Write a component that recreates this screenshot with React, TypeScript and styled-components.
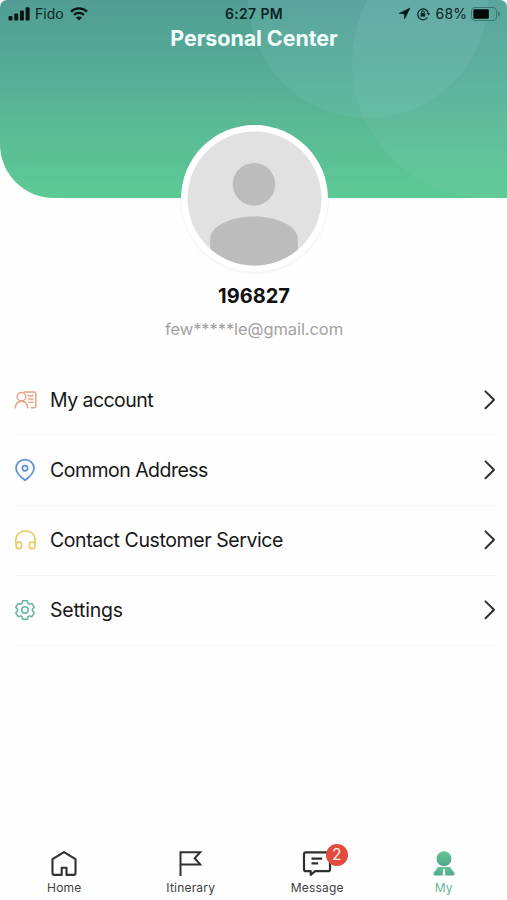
import React from "react";
import styled, { createGlobalStyle } from "styled-components";

const GlobalStyle = createGlobalStyle`
  * { box-sizing: border-box; }
  body { margin: 0; background: #fff; font-family: Inter, "Liberation Sans", sans-serif; }
  svg { display: block; flex: none; overflow: visible; }
`;

const Screen = styled.main`
  width: 507px;
  height: 900px;
  display: flex;
  flex-direction: column;
  align-items: stretch;
  background: #fefefe;
  overflow: hidden;
`;

const Header = styled.header`
  position: relative;
  height: 198px;
  flex: none;
  overflow: hidden;
  border-radius: 7px 7px 0 54px;
  background: linear-gradient(180deg, #519d94 0%, #56ad95 38%, #5ab995 62%, #5dca95 100%);
`;

const Bubbles = styled.svg`
  position: absolute;
  inset: 0;
`;

const StatusBar = styled.div`
  position: relative;
  display: grid;
  grid-template-columns: 1fr auto 1fr;
  height: 27px;
  padding: 0 7px 0 8px;
  align-items: center;
  color: #0c2422;
`;

const StatusGroup = styled.div<{ $end?: boolean }>`
  display: flex;
  align-items: center;
  justify-content: ${(p) => (p.$end ? "flex-end" : "flex-start")};
`;

const StatusText = styled.span<{ $bold?: boolean; $track?: number }>`
  font-size: 14px;
  line-height: 18px;
  font-weight: ${(p) => (p.$bold ? 600 : 400)};
  letter-spacing: ${(p) => p.$track ?? 0}px;
  white-space: nowrap;
`;

const Carrier = styled(StatusText)`
  margin: 0 6px 0 5px;
`;

const Percent = styled(StatusText)`
  margin: 0 4px 0 6px;
`;

const Title = styled.h1`
  position: relative;
  margin: -2px 0 0;
  padding-left: 1px;
  text-align: center;
  font-size: 21.5px;
  line-height: 26px;
  font-weight: 650;
  letter-spacing: -0.08px;
  color: #f3fffc;
`;

const Profile = styled.section`
  position: relative;
  display: flex;
  flex-direction: column;
  align-items: center;
  height: 167px;
  flex: none;
  padding-left: 1px;
`;

const Avatar = styled.div`
  width: 147px;
  height: 147px;
  margin-top: -73.5px;
  padding: 6px;
  border-radius: 50%;
  background: #fff;
  box-shadow: 0 1px 3px rgba(0, 0, 0, 0.07);
`;

const UserName = styled.h2`
  margin: 11.5px 0 0;
  font-size: 20px;
  line-height: 26px;
  font-weight: 700;
  color: #111;
`;

const Email = styled.p`
  margin: 9px 0 0;
  font-size: 16.5px;
  line-height: 22px;
  letter-spacing: -0.08px;
  color: #a2a2a2;
`;

const Menu = styled.nav`
  display: flex;
  flex-direction: column;
  padding: 0 12px 0 15px;
`;

const MenuRow = styled.a`
  display: flex;
  align-items: center;
  height: 70.25px;
  border-bottom: 1px solid #f3f3f3;
  color: #171717;
`;

const MenuIcon = styled.span`
  width: 35px;
  display: flex;
`;

const MenuLabel = styled.span<{ $track: number }>`
  flex: 1;
  font-size: 19.5px;
  line-height: 26px;
  letter-spacing: ${(p) => p.$track}px;
`;

const TabBar = styled.nav`
  margin-top: auto;
  display: grid;
  grid-template-columns: repeat(4, 1fr);
  height: 56px;
  padding-left: 1px;
`;

const Tab = styled.a<{ $active?: boolean }>`
  display: flex;
  flex-direction: column;
  align-items: center;
  padding-top: 6px;
  gap: 1.5px;
  font-size: 12px;
  line-height: 16px;
  letter-spacing: 0.2px;
  color: ${(p) => (p.$active ? "#60b79a" : "#414141")};
`;

const TabIcon = styled.span`
  position: relative;
  display: flex;
`;

const Badge = styled.span`
  position: absolute;
  left: 22.5px;
  top: -6px;
  width: 22px;
  height: 22px;
  border-radius: 50%;
  background: #e24b3d;
  color: #fff0ed;
  font-size: 15.5px;
  line-height: 22px;
  letter-spacing: 0;
  text-align: center;
`;

const Signal = () => (
  <svg width="22" height="14" viewBox="0 0 22 14" fill="#071514">
    <rect x="0.5" y="9" width="4" height="4.5" rx="1" />
    <rect x="6.2" y="6.5" width="4" height="7" rx="1" />
    <rect x="11.9" y="3.5" width="4" height="10" rx="1" />
    <rect x="17.6" y="0.3" width="4" height="13.2" rx="1" />
  </svg>
);

const Wifi = () => (
  <svg width="18" height="14" viewBox="0 0 18 14" fill="none" stroke="#071514">
    <path d="M1 4.6C5.5.3 12.5.3 17 4.6" strokeWidth="2.3" />
    <path d="M4 7.9c2.8-2.6 7.2-2.6 10 0" strokeWidth="2.2" />
    <path d="M9 13.5 6 10.5c1.7-1.5 4.3-1.5 6 0z" fill="#071514" stroke="none" />
  </svg>
);

const LocationArrow = styled.svg`
  margin-right: 7px;
`;

const StatusRight = () => (
  <StatusGroup $end>
    <LocationArrow width="11" height="11" viewBox="0 0 11 11" fill="#071514">
      <path d="M11 0 0 5.4l5.2.4.4 5.200z" stroke="#071514" strokeWidth=".5" />
    </LocationArrow>
    <svg width="13" height="12" viewBox="0 0 13 12" fill="none" stroke="#0b2321" strokeWidth="1.2">
      <path d="M10.5 9.5A5.4 5.4 0 1 1 11.4 5.5" />
      <path d="M9.7 5.2h3.5l-1.7 2.3z" fill="#0b2321" stroke="none" />
      <rect x="3.6" y="5.2" width="4.6" height="3.4" fill="#0b2321" stroke="none" />
      <path d="M4.6 5.3V4a1.3 1.3 0 0 1 2.6 0v1.3" strokeWidth="1" />
    </svg>
    <Percent $track={0.1}>68%</Percent>
    <svg width="29" height="14" viewBox="0 0 29 14">
      <rect x="0.5" y="0.5" width="25" height="13" rx="3.5" fill="none" stroke="#3c7770" />
      <rect x="2.3" y="2.3" width="15.5" height="9.4" rx="1.2" fill="#020a09" />
      <path d="M27 4.5q2 .7 2 2.5t-2 2.5z" fill="#3c7770" />
    </svg>
  </StatusGroup>
);

const AvatarArt = () => (
  <svg width="135" height="135" viewBox="0 0 135 135">
    <defs>
      <clipPath id="avatar-clip"><circle cx="67.5" cy="67.5" r="67" /></clipPath>
    </defs>
    <circle cx="67.5" cy="67.5" r="67" fill="#e1e1e1" />
    <g clipPath="url(#avatar-clip)" fill="#bcbcbc">
      <circle cx="67" cy="53.3" r="21.3" />
      <path d="M23.2 135v-27C23.2 95 44 85.500 67 85.500S110.800 95 110.800 108v27z" />
    </g>
  </svg>
);

const AccountIcon = () => (
  <svg width="22" height="18" viewBox="0 0 22 18" fill="none" stroke="#e8a583" strokeWidth="1.5" strokeLinecap="round" strokeLinejoin="round">
    <circle cx="6.5" cy="5.8" r="4.3" />
    <path d="M.3 16.7c.4-4 2.8-6.500 6.200-6.500s5.800 2.500 6.200 6.500M9.500 1h9.800q1.500 0 1.500 1.500v12.700q0 1.500-1.500 1.500h-3M13 4.700h5M13.500 8h4.500M14 11.300h4" />
  </svg>
);

const PinIcon = () => (
  <svg width="20" height="22" viewBox="0 0 20 22" fill="none" stroke="#5b91d3" strokeWidth="1.7" strokeLinejoin="round">
    <path d="M10 21.2C5 17.500 1 13.700 1 9.200a9 8.600 0 0 1 18 0c0 4.500-4 8.300-9 12z" />
    <circle cx="10" cy="9.3" r="2.6" />
  </svg>
);

const HeadsetIcon = () => (
  <svg width="21" height="20" viewBox="0 0 21 20" fill="none" stroke="#e9cb62" strokeWidth="1.7">
    <path d="M1.300 14.500C-.8 6 4 1 10.500 1s11.300 5 9.200 13.500" />
    <rect x="1.2" y="12" width="5.4" height="6.6" rx="2.7" />
    <rect x="14.4" y="12" width="5.4" height="6.6" rx="2.7" />
  </svg>
);

const GearIcon = () => (
  <svg width="20" height="20" viewBox="0 0 20 20" fill="none" stroke="#66b5a1" strokeWidth="1.5" strokeLinejoin="round">
    <path d="M7.700.8h4.600l.6 2.500 1.500.9 2.500-.8 2.400 4-1.900 1.800v1.700l1.900 1.800-2.400 4-2.500-.8-1.500.9-.6 2.500H7.700l-.6-2.500-1.500-.9-2.500.8-2.400-4 1.900-1.800V9.200L.7 7.400l2.400-4 2.500.8 1.500-.9z" />
    <circle cx="10" cy="10" r="3.2" />
  </svg>
);

const Chevron = () => (
  <svg width="11" height="20" viewBox="0 0 11 20" fill="none" stroke="#303030" strokeWidth="2" strokeLinecap="round" strokeLinejoin="round">
    <path d="m1.500 1.400 8.500 8.300-8.500 8.500" />
  </svg>
);

const HomeIcon = () => (
  <svg width="26" height="28" viewBox="0 0 26 28" fill="none" stroke="#303030" strokeWidth="2.1" strokeLinejoin="round">
    <path d="M1.500 9.200 13 2.100l11.500 7.100v13.700q0 2-2 2h-7v-7.200h-4.800v7.200H3.500q-2 0-2-2z" />
  </svg>
);

const FlagIcon = () => (
  <svg width="24" height="28" viewBox="0 0 24 28" fill="none" stroke="#303030" strokeWidth="2">
    <path d="M1.500 26V2.300h19.700L15.700 8.200l5.500 6.200H1.500" />
  </svg>
);

const MessageIcon = () => (
  <svg width="28" height="28" viewBox="0 0 28 28" fill="none" stroke="#303030" strokeWidth="2.2" strokeLinejoin="round">
    <path d="M3 2.400h22q2 0 2 2v14.800q0 2-2 2H12.200L7.700 24.800v-3.600H3q-2 0-2-2V4.400q0-2 2-2z" />
    <path d="M8.500 8.600h10.700M8.500 13.400h6.700" />
  </svg>
);

const MyIcon = () => (
  <svg width="22" height="28" viewBox="0 0 22 28">
    <defs>
      <linearGradient id="person" x2="0" y2="1">
        <stop stopColor="#65c397" /><stop offset="1" stopColor="#52a58b" />
      </linearGradient>
    </defs>
    <g fill="url(#person)">
      <circle cx="11" cy="8.7" r="7.5" />
      <path d="M5 17h12L21.500 23.300q.5 2.300-1.500 2.300H2Q0 25.600.5 23.300z" />
    </g>
    <path d="m9.600 18.500 1.400.8 1.400-.8-.5 2 .7 5.100H9.400l.7-5.100z" fill="#e7f7f0" />
  </svg>
);

const items = [
  { label: "My account", Icon: AccountIcon, track: -0.55 },
  { label: "Common Address", Icon: PinIcon, track: -0.52 },
  { label: "Contact Customer Service", Icon: HeadsetIcon, track: -0.41 },
  { label: "Settings", Icon: GearIcon, track: -0.22 },
];

const tabs = [
  { label: "Home", Icon: HomeIcon },
  { label: "Itinerary", Icon: FlagIcon },
  { label: "Message", Icon: MessageIcon, badge: 2 },
  { label: "My", Icon: MyIcon, active: true },
];

export default function App() {
  return (
    <>
      <GlobalStyle />
      <Screen>
        <Header>
          <Bubbles width="507" height="198">
            <defs>
              <linearGradient id="bubble" x2="0" y2="198" gradientUnits="userSpaceOnUse">
                <stop stopColor="#a7d8e6" stopOpacity="0.12" />
                <stop offset="1" stopColor="#a7d8e6" stopOpacity="0.06" />
              </linearGradient>
            </defs>
            <g fill="url(#bubble)">
              <circle cx="368" cy="-2" r="120" />
              <circle cx="487" cy="63" r="135" />
            </g>
          </Bubbles>
          <StatusBar>
            <StatusGroup>
              <Signal />
              <Carrier>Fido</Carrier>
              <Wifi />
            </StatusGroup>
            <StatusText $bold $track={0.35}>6:27 PM</StatusText>
            <StatusRight />
          </StatusBar>
          <Title>Personal Center</Title>
        </Header>
        <Profile>
          <Avatar><AvatarArt /></Avatar>
          <UserName>196827</UserName>
          <Email>few*****le@gmail.com</Email>
        </Profile>
        <Menu>
          {items.map(({ label, Icon, track }) => (
            <MenuRow key={label}>
              <MenuIcon><Icon /></MenuIcon>
              <MenuLabel $track={track}>{label}</MenuLabel>
              <Chevron />
            </MenuRow>
          ))}
        </Menu>
        <TabBar>
          {tabs.map(({ label, Icon, badge, active }) => (
            <Tab key={label} $active={active}>
              <TabIcon>
                <Icon />
                {badge && <Badge>{badge}</Badge>}
              </TabIcon>
              {label}
            </Tab>
          ))}
        </TabBar>
      </Screen>
    </>
  );
}
